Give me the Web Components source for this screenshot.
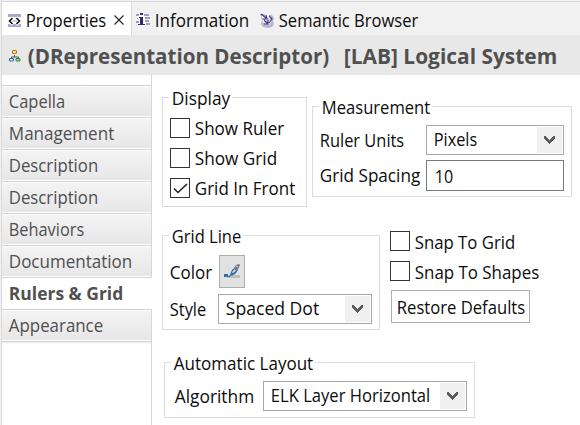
<!DOCTYPE html>
<html lang="en"><head><meta charset="utf-8"><title>Properties</title>
<style>
html,body{margin:0;height:100%;overflow:hidden}
body{background:#f0f0f0;font:18.2px/24px "Open Sans","Noto Sans",sans-serif;color:#0c0c0c}
</style></head><body>
<properties-view></properties-view>
<script>
const define=(name,html,setup)=>{
  const t=document.createElement('template');t.innerHTML=html;
  customElements.define(name,class extends HTMLElement{
    connectedCallback(){
      if(this.shadowRoot)return;
      this.attachShadow({mode:'open'}).append(t.content.cloneNode(true));
      if(setup)setup(this,this.shadowRoot);
    }
  });
};
// Text condensed or widened to a box of w pixels, with a small side bearing.
define('fit-text',`<style>:host{display:block;height:24px;white-space:pre;flex:none}span{display:inline-block;transform-origin:0 0}</style><span><slot></slot></span>`,(h,r)=>{
  const w=+h.getAttribute('w'),s=r.querySelector('span');
  h.style.width=w+'px';
  s.style.transform=`translateX(.8px) scaleX(${(w-1.6)/s.getBoundingClientRect().width})`;
});
define('view-icon',`<style>:host{display:block;flex:none}svg{display:block}</style><div></div>`,(h,r)=>{
  const art={
    properties:`<path d="M1 0h13v3H1zM1 10h13v3H1z" fill="#aaa6cc"/><path d="M1 6h13v2H1z" fill="#d6d3e6"/><path d="M5.700 3.400 2.100 7l3.600 3.600M9.300 3.400 12.900 7l-3.600 3.600" fill="none" stroke="#fff" stroke-width="3.200"/><path d="M5.500 4 2.500 7l3 3M9.500 4l3 3-3 3" fill="none" stroke="#111" stroke-width="1.600"/>`,
    info:`<path d="M0 1h4v2H0zM1 5h3v1H1zM0 8h4v2H0zM8 1h5v2H8zM9 4h5v2H9zM8 7h5v2H8zM9 10h5v2H9z" fill="#a09bc8"/><path d="M3 0h5v3h1v7h1v3H2v-3h1V6H2V3h1z" fill="#fff"/><path d="M4 0h3v2H4zM3 4h4v7h2v1H2v-1h2V5H3z" fill="#302b78"/>`,
    tree:`<path d="M5.500 5v2M2.500 9V7h7v2" fill="none" stroke="#555"/><rect x="3.500" y=".5" width="4" height="3" rx=".5" fill="#ffe79a" stroke="#b87910"/><rect x=".5" y="8.500" width="4" height="2.500" rx=".5" fill="#d6e8ff" stroke="#335e99"/><rect x="7" y="8.500" width="4" height="2.500" rx=".5" fill="#a9df8c" stroke="#247b34"/>`,
    semantic:`<path d="M1 1h4l2 1h6l2 3-1 3 1 3-2 3-4 1-5-1-2-3 1-4z" fill="#b9b5d3"/><path d="M3 3 8 7M7 2l4 3M4 7l4 4M9 11l3-4" fill="none" stroke="#fff" stroke-width="2.600"/><path d="M2 1l5 4M7 2l1 4H4M5 7l4 4M5 11h4V7M10 3l3 3-3 4" fill="none" stroke="#39347e" stroke-width="1.100"/>`,
    brush:`<path d="M3 11h13v3H3z" fill="#bcbcbc"/><path d="M0 10h4v2h2v1H0z" fill="#356da8"/><path d="M5 12c2-1 1-4 4-7l3-2 2 2c-1 4-4 7-9 7z" fill="#356fa9"/><path d="M8 9c0-2 2-3 3-4l1 1c-1 2-2 3-4 3z" fill="#b9d7ee"/><path d="M10 4l2-3 3-1 1 1-2 4-2 1z" fill="#777"/><path d="M12 2l2 1" stroke="#ddd"/>`,
    chevron:`<path d="M0 1h2v1h1v1h1v1h1v1h1V4h1V3h1V2h1V1h2v3h-1v1H9v1H8v1H7v1H6v1H5V8H4V7H3V6H2V5H1V4H0z" fill="#5c5c5c"/>`,
    close:`<path d="M.5.5l9 9M9.500.5l-9 9" fill="none" stroke="#222" stroke-width="1.100"/>`,
    check:`<path d="M1 5.500 5 9.500 14 1" fill="none" stroke="#222" stroke-width="1.600"/>`
  },n=h.getAttribute('name'),box={properties:[15,14],info:[14,14],tree:[12,12],semantic:[16,15],brush:[17,15],chevron:[11,10],close:[10,10],check:[15,11]}[n];
  r.querySelector('div').innerHTML=`<svg width="${box[0]}" height="${box[1]}" viewBox="0 0 ${box[0]} ${box[1]}">${art[n]}</svg>`;
});
define('view-tabs',`<style>
:host{display:grid;grid-template-columns:129px 1fr;height:35px;box-sizing:border-box;border-top:1px solid #d9d9d9;background:#f1f1f1}
.on,.off{display:flex;box-sizing:border-box}.on{background:#fff;padding:6px 0 0 5px}
.off{border-left:1px solid #d9d9d9;border-bottom:1px solid #d9d9d9;padding:6px 0 0 4px}
view-icon{margin-top:6px}</style>
<div class="on"><view-icon name="properties"></view-icon><fit-text w="82" style="margin-left:3px">Properties</fit-text><view-icon name="close" style="margin:7px 0 0 7px"></view-icon></div>
<div class="off"><view-icon name="info" style="margin-top:5px"></view-icon><fit-text w="96" style="margin-left:4px">Information</fit-text><view-icon name="semantic" style="margin:5px 0 0 9px"></view-icon><fit-text w="141" style="margin-left:3px">Semantic Browser</fit-text></div>`);
define('view-title',`<style>:host{display:flex;height:40px;box-sizing:border-box;background:#e8e8e8;color:#505050;font-weight:700;font-size:21px;padding:9px 0 0 7px}
view-icon{margin-top:6px}</style><view-icon name="tree"></view-icon><fit-text w="303" style="margin-left:6px">(DRepresentation Descriptor)</fit-text><fit-text w="215" style="margin-left:13px">[LAB] Logical System</fit-text>`);
define('side-item',`<style>:host{display:block;height:32px;box-sizing:border-box;padding:3px 0 0 6px;border-top:1px solid #d2d2d2;border-right:1px solid #d6d6d6;background:linear-gradient(#fff 1px,#f3f3f3 1px,#e7e7e7 30px,#fff 30px);color:#505050}
:host([selected]){background:#fff;border-right-color:#fff;font-weight:700}</style><slot></slot>`);
define('side-tabs',`<style>:host{display:flex;flex-direction:column}.gap{height:10px;border-right:1px solid #d6d6d6}.rest{flex:1;border-top:1px solid #d2d2d2;border-right:1px solid #d6d6d6;background:linear-gradient(#efefef 1px,#fff 2px)}</style>
<div class="gap"></div>
<side-item><fit-text w="58">Capella</fit-text></side-item>
<side-item><fit-text w="107">Management</fit-text></side-item>
<side-item><fit-text w="91">Description</fit-text></side-item>
<side-item><fit-text w="91">Description</fit-text></side-item>
<side-item><fit-text w="77">Behaviors</fit-text></side-item>
<side-item><fit-text w="125">Documentation</fit-text></side-item>
<side-item selected><fit-text w="116">Rulers &amp; Grid</fit-text></side-item>
<side-item><fit-text w="96">Appearance</fit-text></side-item>
<div class="rest"></div>`);
define('group-box',`<style>:host{display:block;box-sizing:border-box;border:1px solid #dcdcdc}
.l{display:block;width:max-content;background:#fff;margin:-12px 0 0 6px;padding:0 1px 0 2px}</style><div class="l"><slot name="legend"></slot></div><slot></slot>`);
define('check-box',`<style>:host{display:flex;height:30px}i{display:grid;place-items:center;box-sizing:border-box;width:20px;height:20px;border:1px solid #333;background:#fff;margin-right:4px}
view-icon{display:none}:host([checked]) view-icon{display:block}slot{display:block;margin-top:var(--label-shift,-1px)}</style><i><view-icon name="check"></view-icon></i><slot></slot>`);
define('combo-box',`<style>:host{display:flex;justify-content:space-between;box-sizing:border-box;height:30px;border:1px solid #a7a7ad;background:#fff;padding:1px 1px 1px 6px}
b{display:grid;place-items:center;width:25px;background:#f0f0f0}slot{display:block}</style><slot></slot><b><view-icon name="chevron"></view-icon></b>`);
define('properties-view',`<style>
:host{display:flex;flex-direction:column;height:425px;box-sizing:border-box;margin-left:1px;border-left:1px solid #d9d9d9;padding-top:0;background:#fff}
.edge{height:1px;background:#f0f0f0}
.main{flex:1;display:grid;grid-template-columns:150px 1fr}
.page{padding:22px 0 0 10px}
.row{display:flex;align-items:flex-start}
.checks{padding:8px 0 0 7px;--label-shift:-2px}
.form{display:grid}
.units{grid-template-columns:107px 138px;row-gap:5px;padding:6px 0 0 6px}
.field{box-sizing:border-box;height:31px;border:1px solid #7a7a7a;padding:3px 0 0 7px}
.line{grid-template-columns:49px 154px;padding:7px 0 0 6px;row-gap:6px}
.color{display:grid;place-items:center;box-sizing:border-box;width:26px;height:33px;margin-left:1px;border:1px solid #adadad;background:#e1e1e1}
.btn{box-sizing:border-box;width:139px;height:33px;border:1px solid #adadad;padding:4px 0 0 4px;margin:-1px 0 0 1px}
.algo{grid-template-columns:89px 204px;padding:6px 0 0 9px}
</style>
<div class="edge"></div><view-tabs></view-tabs><view-title style="margin-top:-1px"></view-title>
<div class="main"><side-tabs></side-tabs><div class="page">
<div class="row">
<group-box style="width:145px;height:110px"><fit-text slot="legend" w="60">Display</fit-text>
<div class="checks"><check-box><fit-text w="91">Show Ruler</fit-text></check-box><check-box><fit-text w="84">Show Grid</fit-text></check-box><check-box checked><fit-text w="102">Grid In Front</fit-text></check-box></div></group-box>
<group-box style="width:260px;height:91px;margin:9px 0 0 5px"><fit-text slot="legend" w="110">Measurement</fit-text>
<div class="form units"><fit-text w="86" style="margin-top:3px">Ruler Units</fit-text><combo-box><fit-text w="45">Pixels</fit-text></combo-box>
<fit-text w="102" style="margin-top:3px">Grid Spacing</fit-text><div class="field"><fit-text w="20">10</fit-text></div></div></group-box>
</div>
<div class="row" style="margin-top:28px">
<group-box style="width:218px;height:95px"><fit-text slot="legend" w="71">Grid Line</fit-text>
<div class="form line"><fit-text w="44" style="margin-top:5px">Color</fit-text><div class="color"><view-icon name="brush"></view-icon></div>
<fit-text w="38" style="margin-top:3px">Style</fit-text><combo-box><fit-text w="95">Spaced Dot</fit-text></combo-box></div></group-box>
<div style="margin:-4px 0 0 10px"><check-box><fit-text w="102">Snap To Grid</fit-text></check-box><check-box><fit-text w="126">Snap To Shapes</fit-text></check-box>
<div class="btn"><fit-text w="130">Restore Defaults</fit-text></div></div>
</div>
<group-box style="width:311px;height:56px;margin:32px 0 0 2px"><fit-text slot="legend" w="141">Automatic Layout</fit-text>
<div class="form algo"><fit-text w="81" style="margin-top:3px">Algorithm</fit-text><combo-box><fit-text w="161">ELK Layer Horizontal</fit-text></combo-box></div></group-box>
</div></div>`);
</script></body></html>
